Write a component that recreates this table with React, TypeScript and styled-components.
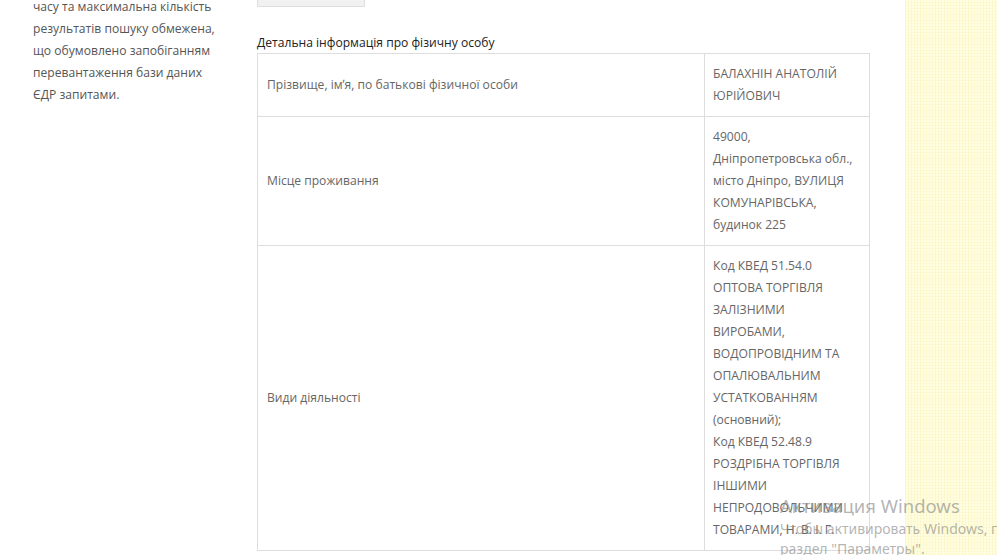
import React from 'react'
import styled, { createGlobalStyle } from 'styled-components'

type Row = {
  label: string
  value: React.ReactNode
}

const rows: Row[] = [
  {
    label: 'Прізвище, імʼя, по батькові фізичної особи',
    value: 'БАЛАХНІН АНАТОЛІЙ ЮРІЙОВИЧ',
  },
  {
    label: 'Місце проживання',
    value: '49000, Дніпропетровська обл., місто Дніпро, ВУЛИЦЯ КОМУНАРІВСЬКА, будинок 225',
  },
  {
    label: 'Види діяльності',
    value: (
      <>
        Код КВЕД 51.54.0 ОПТОВА ТОРГІВЛЯ ЗАЛІЗНИМИ ВИРОБАМИ, ВОДОПРОВІДНИМ ТА
        ОПАЛЮВАЛЬНИМ УСТАТКОВАННЯМ (основний);
        <br />
        Код КВЕД 52.48.9 РОЗДРІБНА ТОРГІВЛЯ ІНШИМИ НЕПРОДОВОЛЬЧИМИ ТОВАРАМИ, Н. В. І. Г.
      </>
    ),
  },
]

const GlobalStyle = createGlobalStyle`
  html, body {
    margin: 0;
    padding: 0;
    background: #fff;
    overflow: hidden;
  }
  body {
    font-family: "Open Sans", "Noto Sans", sans-serif;
    font-size: 12.1px;
    line-height: 22px;
  }
`

const Page = styled.div`
  display: flex;
  height: 555px;
  overflow: hidden;
  position: relative;
`

const Sidebar = styled.aside`
  width: 186px;
  padding-left: 33px;
  margin-right: 38px;
  color: #555;
`

const SidebarText = styled.p`
  margin: -4px 0 0;
`

const Main = styled.main`
  width: 613px;
`

const Button = styled.div`
  width: 106px;
  height: 32px;
  margin-top: -27px;
  background: #f1f1f1;
  border: 1px solid #dedede;
`

const Heading = styled.h3`
  margin: 27px 0 1px;
  font-size: 12.1px;
  font-weight: 400;
  line-height: 18px;
  color: #222;
`

const Table = styled.table`
  width: 613px;
  border-collapse: collapse;
  table-layout: fixed;
  color: #666;
`

const Cell = styled.td<{ $label?: boolean }>`
  border: 1px solid #ddd;
  padding: ${(p) => (p.$label ? '9px 8px 9px 9px' : '9px 13px 9px 8px')};
  vertical-align: middle;
  width: ${(p) => (p.$label ? '429px' : 'auto')};
`

const Pattern = styled.div`
  flex: 1;
  margin-left: 35px;
  background-color: #fffee3;
  background-image: repeating-linear-gradient(
      90deg,
      rgba(246, 238, 170, 0.35) 0 1px,
      transparent 1px 3px
    ),
    repeating-linear-gradient(
      0deg,
      rgba(246, 238, 170, 0.25) 0 1px,
      transparent 1px 3px
    );
`

const Watermark = styled.div`
  position: absolute;
  left: 780px;
  top: 493px;
  font-family: "Noto Sans", "DejaVu Sans", sans-serif;
  color: rgba(130, 130, 130, 0.6);
  white-space: nowrap;
  pointer-events: none;
`

const WatermarkTitle = styled.div`
  font-size: 18.5px;
  line-height: 26px;
`

const WatermarkLine = styled.div`
  font-size: 14px;
  line-height: 20px;
`

export default function App() {
  return (
    <>
      <GlobalStyle />
      <Page>
        <Sidebar>
          <SidebarText>
            часу та максимальна кількість результатів пошуку обмежена, що обумовлено
            запобіганням перевантаження бази даних ЄДР запитами.
          </SidebarText>
        </Sidebar>
        <Main>
          <Button />
          <Heading>Детальна інформація про фізичну особу</Heading>
          <Table>
            <tbody>
              {rows.map((row) => (
                <tr key={row.label}>
                  <Cell $label>{row.label}</Cell>
                  <Cell>{row.value}</Cell>
                </tr>
              ))}
            </tbody>
          </Table>
        </Main>
        <Pattern />
        <Watermark>
          <WatermarkTitle>Активация Windows</WatermarkTitle>
          <WatermarkLine>Чтобы активировать Windows, перейдите в</WatermarkLine>
          <WatermarkLine>раздел "Параметры".</WatermarkLine>
        </Watermark>
      </Page>
    </>
  )
}
